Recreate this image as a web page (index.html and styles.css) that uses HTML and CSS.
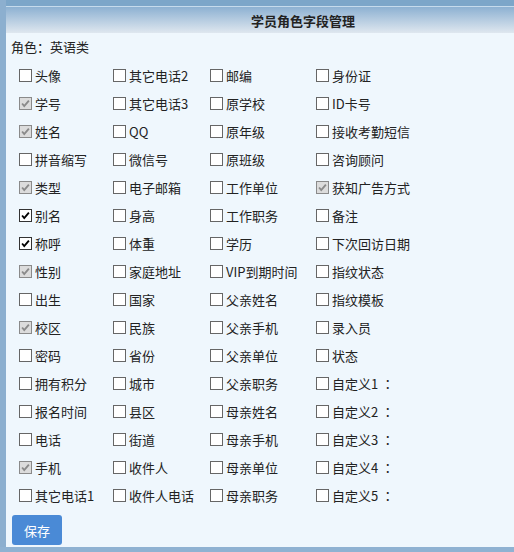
FILE: index.html
```html
<!DOCTYPE html>
<html lang="zh">
<head>
<meta charset="utf-8">
<title>学员角色字段管理</title>
<link rel="stylesheet" href="styles.css">
</head>
<body>
<div class="window">
  <div class="topbar"></div>
  <div class="titlebar"><span class="title">学员角色字段管理</span></div>
  <div class="content">
    <div class="role">角色<span class="colon">：</span>英语类</div>
    <div class="fields">
      <label class="field"><span class="box"></span>头像</label>
      <label class="field"><span class="box"></span>其它电话2</label>
      <label class="field"><span class="box"></span>邮编</label>
      <label class="field"><span class="box"></span>身份证</label>

      <label class="field"><span class="box locked"><svg viewBox="0 0 13 13"><path d="M2.5 6.5 L5 9.5 L10.5 3"/></svg></span>学号</label>
      <label class="field"><span class="box"></span>其它电话3</label>
      <label class="field"><span class="box"></span>原学校</label>
      <label class="field"><span class="box"></span>ID卡号</label>

      <label class="field"><span class="box locked"><svg viewBox="0 0 13 13"><path d="M2.5 6.5 L5 9.5 L10.5 3"/></svg></span>姓名</label>
      <label class="field"><span class="box"></span>QQ</label>
      <label class="field"><span class="box"></span>原年级</label>
      <label class="field"><span class="box"></span>接收考勤短信</label>

      <label class="field"><span class="box"></span>拼音缩写</label>
      <label class="field"><span class="box"></span>微信号</label>
      <label class="field"><span class="box"></span>原班级</label>
      <label class="field"><span class="box"></span>咨询顾问</label>

      <label class="field"><span class="box locked"><svg viewBox="0 0 13 13"><path d="M2.5 6.5 L5 9.5 L10.5 3"/></svg></span>类型</label>
      <label class="field"><span class="box"></span>电子邮箱</label>
      <label class="field"><span class="box"></span>工作单位</label>
      <label class="field"><span class="box locked"><svg viewBox="0 0 13 13"><path d="M2.5 6.5 L5 9.5 L10.5 3"/></svg></span>获知广告方式</label>

      <label class="field"><span class="box checked"><svg viewBox="0 0 13 13"><path d="M2.5 6.5 L5 9.5 L10.5 3"/></svg></span>别名</label>
      <label class="field"><span class="box"></span>身高</label>
      <label class="field"><span class="box"></span>工作职务</label>
      <label class="field"><span class="box"></span>备注</label>

      <label class="field"><span class="box checked"><svg viewBox="0 0 13 13"><path d="M2.5 6.5 L5 9.5 L10.5 3"/></svg></span>称呼</label>
      <label class="field"><span class="box"></span>体重</label>
      <label class="field"><span class="box"></span>学历</label>
      <label class="field"><span class="box"></span>下次回访日期</label>

      <label class="field"><span class="box locked"><svg viewBox="0 0 13 13"><path d="M2.5 6.5 L5 9.5 L10.5 3"/></svg></span>性别</label>
      <label class="field"><span class="box"></span>家庭地址</label>
      <label class="field"><span class="box"></span>VIP到期时间</label>
      <label class="field"><span class="box"></span>指纹状态</label>

      <label class="field"><span class="box"></span>出生</label>
      <label class="field"><span class="box"></span>国家</label>
      <label class="field"><span class="box"></span>父亲姓名</label>
      <label class="field"><span class="box"></span>指纹模板</label>

      <label class="field"><span class="box locked"><svg viewBox="0 0 13 13"><path d="M2.5 6.5 L5 9.5 L10.5 3"/></svg></span>校区</label>
      <label class="field"><span class="box"></span>民族</label>
      <label class="field"><span class="box"></span>父亲手机</label>
      <label class="field"><span class="box"></span>录入员</label>

      <label class="field"><span class="box"></span>密码</label>
      <label class="field"><span class="box"></span>省份</label>
      <label class="field"><span class="box"></span>父亲单位</label>
      <label class="field"><span class="box"></span>状态</label>

      <label class="field"><span class="box"></span>拥有积分</label>
      <label class="field"><span class="box"></span>城市</label>
      <label class="field"><span class="box"></span>父亲职务</label>
      <label class="field"><span class="box"></span>自定义1<span class="colon">：</span></label>

      <label class="field"><span class="box"></span>报名时间</label>
      <label class="field"><span class="box"></span>县区</label>
      <label class="field"><span class="box"></span>母亲姓名</label>
      <label class="field"><span class="box"></span>自定义2<span class="colon">：</span></label>

      <label class="field"><span class="box"></span>电话</label>
      <label class="field"><span class="box"></span>街道</label>
      <label class="field"><span class="box"></span>母亲手机</label>
      <label class="field"><span class="box"></span>自定义3<span class="colon">：</span></label>

      <label class="field"><span class="box locked"><svg viewBox="0 0 13 13"><path d="M2.5 6.5 L5 9.5 L10.5 3"/></svg></span>手机</label>
      <label class="field"><span class="box"></span>收件人</label>
      <label class="field"><span class="box"></span>母亲单位</label>
      <label class="field"><span class="box"></span>自定义4<span class="colon">：</span></label>

      <label class="field"><span class="box"></span>其它电话1</label>
      <label class="field"><span class="box"></span>收件人电话</label>
      <label class="field"><span class="box"></span>母亲职务</label>
      <label class="field"><span class="box"></span>自定义5<span class="colon">：</span></label>
    </div>
    <div class="actions"><button class="btn-save" type="button">保存</button></div>
  </div>
</div>
</body>
</html>
```

FILE: styles.css
```css
html, body {
  margin: 0;
  padding: 0;
}
body {
  width: 514px;
  height: 552px;
  overflow: hidden;
  font-family: "Noto Sans CJK SC", "Noto Sans", sans-serif;
  font-size: 13px;
  color: #222;
  background: #8fb2d2;
}
.window {
  height: 547px;
  border-left: 6px solid #8cafcf;
  display: flex;
  flex-direction: column;
}
.topbar {
  height: 6px;
  background: #7ca6c9;
  border-bottom: 1px solid #c6dbec;
}
.titlebar {
  height: 26px;
  background: linear-gradient(#8db1d2, #dfe7ef);
  display: flex;
  align-items: center;
  padding-left: 245px;
}
.title {
  font-weight: bold;
  font-size: 13px;
  color: #222;
}
.content {
  flex: 1;
  background: #eff7fd;
  display: flex;
  flex-direction: column;
}
.role {
  height: 28px;
  line-height: 28px;
  padding-left: 5px;
}
.colon {
  font-family: "Noto Sans CJK TC", "Noto Sans CJK SC", sans-serif;
}
.fields {
  display: grid;
  grid-template-columns: 94px 97px 106px 1fr;
  grid-auto-rows: 28px;
  padding-left: 13px;
}
.field {
  display: flex;
  align-items: center;
  white-space: nowrap;
  gap: 3px;
}
.box {
  box-sizing: border-box;
  width: 13px;
  height: 13px;
  border: 1px solid #666;
  background: #fff;
  display: inline-flex;
  flex: none;
}
.box svg {
  width: 11px;
  height: 11px;
  fill: none;
  stroke-width: 2.2;
}
.box.locked {
  background: #dcdcdc;
  border-color: #8a8a8a;
}
.box.locked svg {
  stroke: #8a8a8a;
}
.box.checked {
  border-color: #333;
}
.box.checked svg {
  stroke: #000;
}
.actions {
  padding: 6px 0 0 6px;
}
.btn-save {
  width: 50px;
  height: 30px;
  border: none;
  border-radius: 3px;
  background: #4a8ad6;
  color: #fff;
  font-family: inherit;
  font-size: 13px;
  padding: 0;
}
```
